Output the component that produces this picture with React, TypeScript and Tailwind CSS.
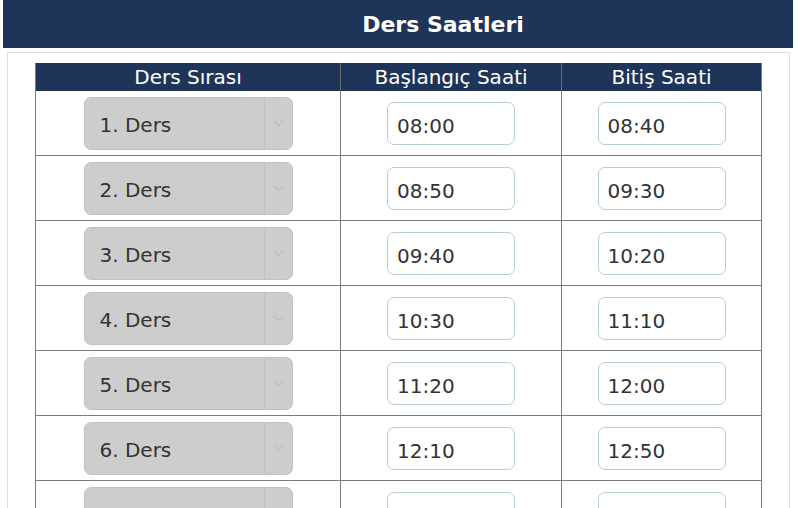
const rows = [
  { ders: '1. Ders', start: '08:00', end: '08:40' },
  { ders: '2. Ders', start: '08:50', end: '09:30' },
  { ders: '3. Ders', start: '09:40', end: '10:20' },
  { ders: '4. Ders', start: '10:30', end: '11:10' },
  { ders: '5. Ders', start: '11:20', end: '12:00' },
  { ders: '6. Ders', start: '12:10', end: '12:50' },
  { ders: '7. Ders', start: '13:00', end: '13:40' },
];

const Chevron = () => (
  <svg width="11" height="7" viewBox="0 0 11 7" fill="none">
    <path d="M1 1l4.5 4.5L10 1" stroke="#b4b4b4" strokeWidth="1" />
  </svg>
);

const TimeBox = ({ value }: { value: string }) => (
  <input
    readOnly
    value={value}
    className="w-[128px] h-[43px] rounded-[7px] border border-[#b9cdd4] bg-white pl-[9px] pt-[5px] text-[20px] text-[#333] outline-none"
  />
);

export default function App() {
  return (
    <div className="w-[800px] h-[508px] overflow-hidden bg-white font-['DejaVu_Sans',Verdana,sans-serif]">
      <div className="ml-[3px] mr-[7px] h-[48px] bg-[#1f3459] flex items-center justify-center pl-[90px]">
        <h1 className="text-white font-bold text-[22px]">Ders Saatleri</h1>
      </div>

      <div className="mt-[4px] ml-[7px] mr-[10px] h-[460px] border border-b-0 border-[#e0e0e0] pl-[27px] pr-[27px] pt-[10px]">
        <div className="w-[727px] border-l border-r border-[#7c7c7c]">
          <div className="flex h-[28px] bg-[#1f3459] text-white text-[20px] leading-[28px]">
            <div className="w-[305px] border-r border-[#6b6b6b] text-center">Ders Sırası</div>
            <div className="w-[221px] border-r border-[#6b6b6b] text-center">Başlangıç Saati</div>
            <div className="flex-1 text-center">Bitiş Saati</div>
          </div>

          {rows.map((r) => (
            <div key={r.ders} className="flex h-[65px] border-b border-[#7c7c7c]">
              <div className="w-[305px] border-r border-[#7c7c7c] flex items-center justify-center">
                <div className="w-[209px] h-[53px] rounded-[7px] bg-[#cdcdcd] border border-[#b6c6ca] flex">
                  <span className="flex-1 flex items-center pl-[15px] pt-[4px] text-[20px] text-[#333]">
                    {r.ders}
                  </span>
                  <span className="w-[28px] border-l border-[#c0c0c0] flex items-center justify-center">
                    <Chevron />
                  </span>
                </div>
              </div>
              <div className="w-[221px] border-r border-[#7c7c7c] flex items-center justify-center">
                <TimeBox value={r.start} />
              </div>
              <div className="flex-1 flex items-center justify-center">
                <TimeBox value={r.end} />
              </div>
            </div>
          ))}
        </div>
      </div>
    </div>
  );
}
